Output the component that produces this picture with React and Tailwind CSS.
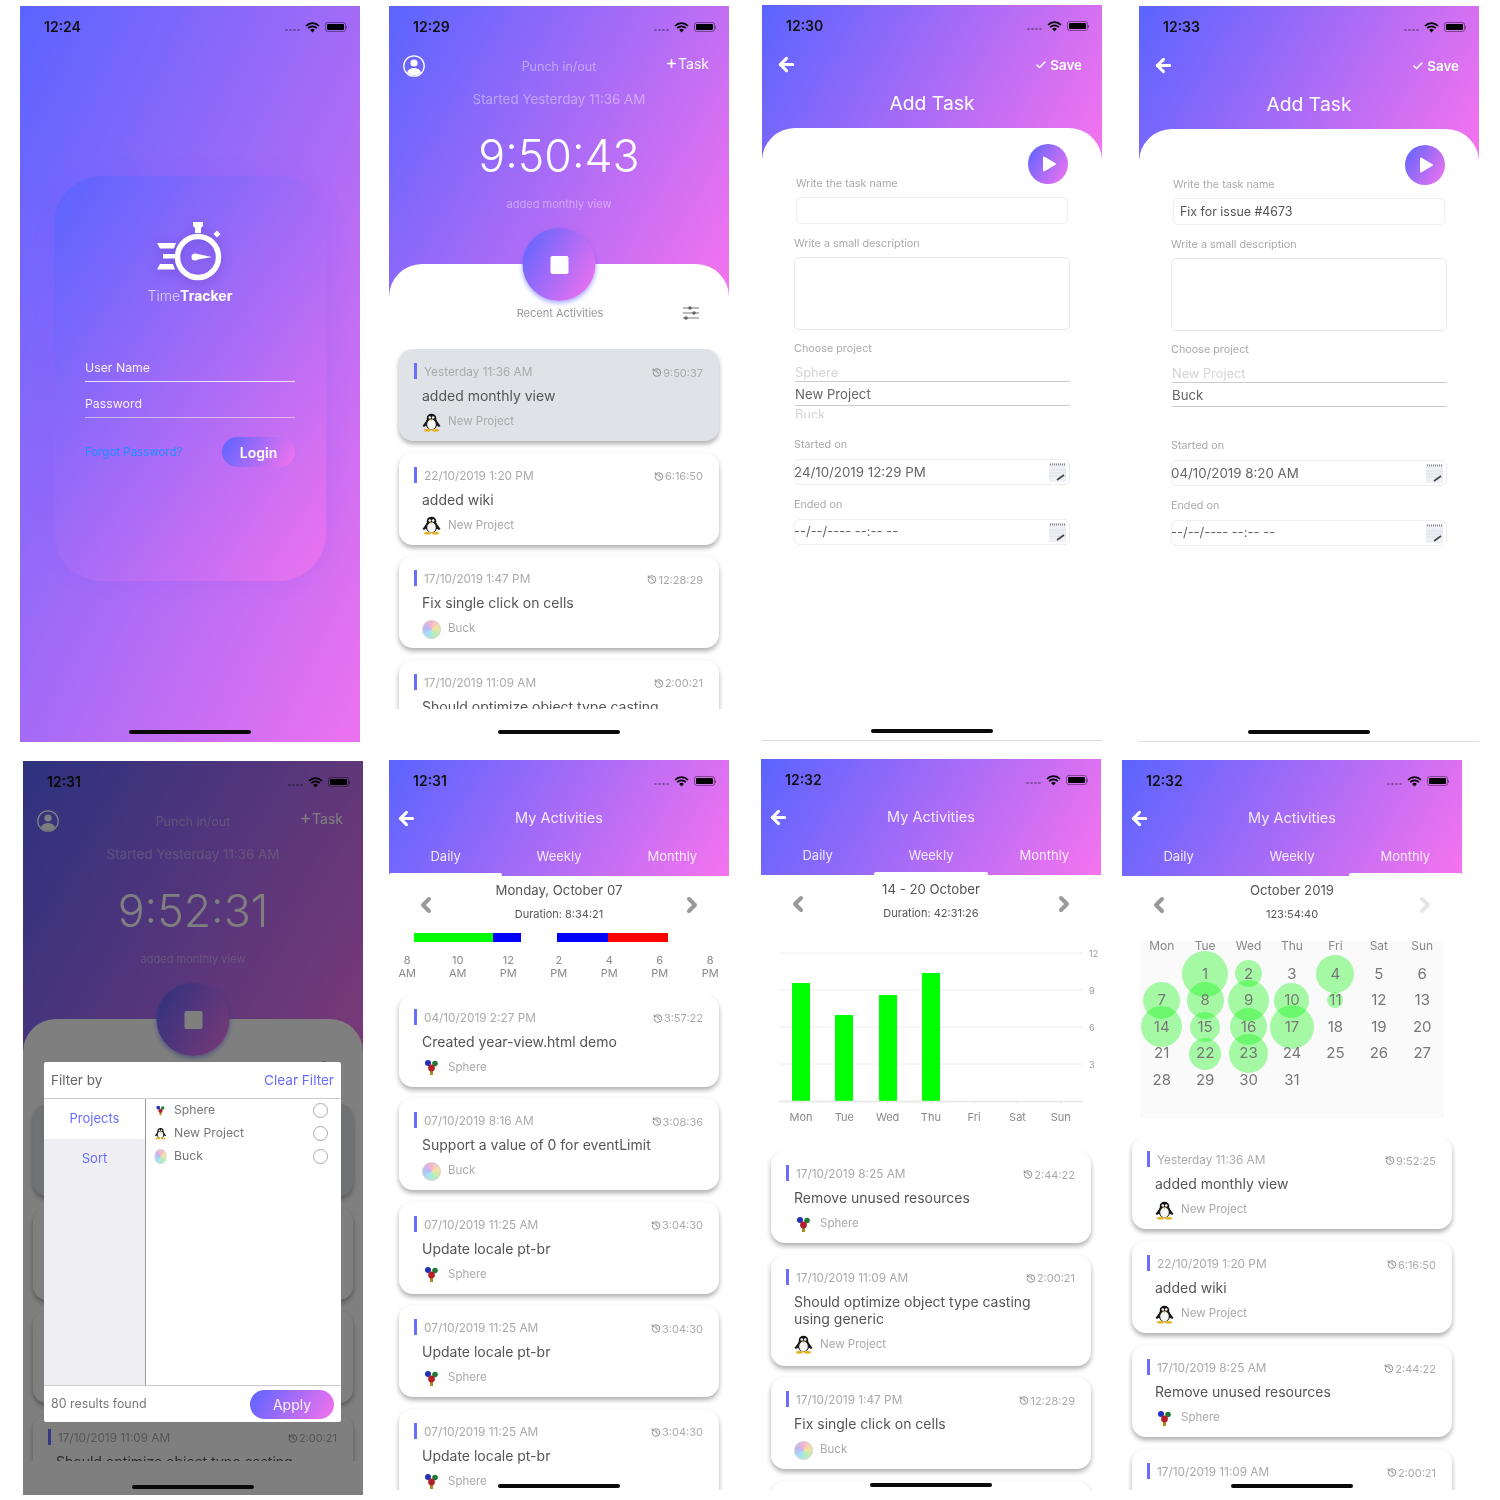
import { ArrowLeft, Check, ChevronLeft, ChevronRight, History, Plus } from 'lucide-react';

const GRADIENT = 'bg-[linear-gradient(120deg,#5a64ff,#f673ee)]';
const LOGIN_GRADIENT = 'bg-[linear-gradient(to_bottom_right,#5a64ff,#f673ee_106%)]';

const TASKS = {
  monthly: { date: 'Yesterday 11:36 AM', time: '9:50:37', title: 'added monthly view', project: 'New Project', selected: true },
  wiki: { date: '22/10/2019 1:20 PM', time: '6:16:50', title: 'added wiki', project: 'New Project' },
  cells: { date: '17/10/2019 1:47 PM', time: '12:28:29', title: 'Fix single click on cells', project: 'Buck' },
  casting: { date: '17/10/2019 11:09 AM', time: '2:00:21', title: 'Should optimize object type casting using generic', project: 'New Project' },
  demo: { date: '04/10/2019 2:27 PM', time: '3:57:22', title: 'Created year-view.html demo', project: 'Sphere' },
  limit: { date: '07/10/2019 8:16 AM', time: '3:08:36', title: 'Support a value of 0 for eventLimit', project: 'Buck' },
  locale: { date: '07/10/2019 11:25 AM', time: '3:04:30', title: 'Update locale pt-br', project: 'Sphere' },
  unused: { date: '17/10/2019 8:25 AM', time: '2:44:22', title: 'Remove unused resources', project: 'Sphere' },
};

const BUBBLES = { 1: 46, 2: 27, 4: 38, 7: 37, 8: 37, 9: 41, 10: 35, 11: 16, 14: 41, 15: 30, 16: 37, 17: 44, 22: 32, 23: 39 };

function Phone({ className = '', children }) {
  return <div className={`relative w-[340px] shrink-0 overflow-hidden bg-white flex flex-col ${className}`}>{children}</div>;
}

function HomeBar() {
  return <div className="absolute left-1/2 -translate-x-1/2 top-[724px] w-[122px] h-[4px] rounded-full bg-[#0a0a0a] z-20"></div>;
}

function StatusBar({ time }) {
  return (
    <div className="h-[42px] shrink-0 flex items-center pl-[24px] pr-[13px] text-[#111]">
      <span className="text-[14px] font-semibold -translate-y-[1px]">{time}</span>
      <div className="ml-auto flex items-center">
        <span className="flex gap-[1.5px] mr-[5px] mt-[6px]">
          <i className="w-[2.5px] h-[2.5px] rounded-full bg-black/30"></i>
          <i className="w-[2.5px] h-[2.5px] rounded-full bg-black/30"></i>
          <i className="w-[2.5px] h-[2.5px] rounded-full bg-black/30"></i>
          <i className="w-[2.5px] h-[2.5px] rounded-full bg-black/30"></i>
        </span>
        <svg width="15" height="11" viewBox="0 0 15 11" className="mr-[5px]">
          <path d="M1 4a9 9 0 0 1 13 0M3.2 6.2a6 6 0 0 1 8.6 0" fill="none" stroke="#000" strokeWidth="1.7" />
          <path d="M5.2 8a3.2 3.2 0 0 1 4.6 0L7.5 10.6z" fill="#000" />
        </svg>
        <span className="w-[21px] h-[10px] rounded-[2.5px] border border-black/40 p-[1px] flex">
          <i className="flex-1 bg-black rounded-[1px]"></i>
        </span>
        <i className="ml-[0.5px] w-[1px] h-[3px] bg-black/40"></i>
      </div>
    </div>
  );
}

function SphereIcon() {
  return (
    <svg width="19" height="19" viewBox="0 0 19 19">
      <path d="M9.5 9 L9.500 17" stroke="#a88a20" strokeWidth="3" />
      <circle cx="6" cy="5" r="3" fill="#2230b8" />
      <circle cx="13" cy="5.500" r="2.800" fill="#1f7a35" />
      <circle cx="9.500" cy="10" r="3.400" fill="#b3202a" />
    </svg>
  );
}

function PenguinIcon() {
  return (
    <svg width="19" height="19" viewBox="0 0 19 19">
      <path d="M5.500 6 L0.500 13 L2 14 L5 12zM13.500 6 L18.500 13 L17 14 L14 12z" fill="#1a1a1a" />
      <circle cx="9.500" cy="5.500" r="4.800" fill="#111" />
      <ellipse cx="9.500" cy="10.500" rx="5.800" ry="6.200" fill="#1a1a1a" />
      <ellipse cx="9.500" cy="11.500" rx="4.300" ry="5" fill="#f6f6f6" />
      <circle cx="7.800" cy="4.500" r="1.300" fill="#fff" />
      <circle cx="11.200" cy="4.500" r="1.300" fill="#fff" />
      <path d="M8 6.300h3L9.500 8z" fill="#e8b21a" />
      <ellipse cx="5.500" cy="17.300" rx="3.600" ry="1.400" fill="#e8b21a" />
      <ellipse cx="13.500" cy="17.300" rx="3.600" ry="1.400" fill="#e8b21a" />
    </svg>
  );
}

function BuckIcon() {
  return (
    <span className="block w-[19px] h-[19px] rounded-full border-[1.5px] border-[#cfcfcf] bg-[conic-gradient(#f6b4cf,#f6e2a0,#b6efb4,#a4e2f6,#bdb6f7,#f6b4cf)]"></span>
  );
}

function ProjectIcon({ name }) {
  if (name === 'Sphere') return <SphereIcon />;
  if (name === 'Buck') return <BuckIcon />;
  return <PenguinIcon />;
}

function TaskCard({ task }) {
  const long = task.title.length > 36;
  return (
    <div className={`shrink-0 rounded-[14px] pl-[15px] pr-[16px] pt-[14px] shadow-[0_3px_5px_rgba(0,0,0,0.32)] ${long ? 'pb-[11px]' : 'pb-[9px]'} ${task.selected ? 'bg-[#dfe2e6]' : 'bg-white'}`}>
      <div className="flex items-center h-[16px]">
        <span className="w-[3px] h-full bg-[#6a6eff]"></span>
        <span className="ml-[7px] translate-y-[1.500px] text-[11.800px] text-[#aaa]">{task.date}</span>
        <span className="ml-auto translate-y-[1.500px] flex items-center gap-[1px] text-[11px] text-[#aaa]">
          <History size={10} strokeWidth={2} className="text-[#777]" />
          {task.time}
        </span>
      </div>
      <div className="mt-[6.500px] pl-[8px] pr-[30px] py-[1.500px] text-[14px] leading-[17px] text-[#555]">{task.title}</div>
      <div className="mt-[6.500px] pl-[8px] h-[20px] flex items-center">
        <ProjectIcon name={task.project} />
        <span className="ml-[7px] text-[11.500px] text-[#aaa]">{task.project}</span>
      </div>
    </div>
  );
}

function CardList({ tasks, className = '', gap = 'gap-[11.500px]' }) {
  return (
    <div className={`flex flex-col px-[10px] pb-[6px] overflow-hidden ${gap} ${className}`}>
      {tasks.map((t, i) => <TaskCard key={i} task={t} />)}
    </div>
  );
}

function Logo() {
  return (
    <svg width="68" height="60" viewBox="0 0 68 60" className="drop-shadow-[0_3px_6px_rgba(60,30,160,0.35)]">
      <circle cx="42" cy="35" r="20.500" fill="none" stroke="#fff" strokeWidth="5.500" />
      <path d="M37 0h10v4l-2 2v5h-6V6l-2-2z" fill="#fff" />
      <path d="M57.500 12l3.500-3.500 3.500 3.500-3.500 3.500z" fill="#fff" />
      <circle cx="39" cy="35" r="3.500" fill="#fff" />
      <path d="M39 31.500L56 35L39 38z" fill="#fff" />
      <path d="M1 21h19l-2 5.500H4zM7 32h12v4.500H7zM1 47.500l3-5.500h13l2 5.500z" fill="#fff" />
    </svg>
  );
}

function LoginScreen() {
  return (
    <Phone className={`h-[736px] ${LOGIN_GRADIENT}`}>
      <StatusBar time="12:24" />
      <div className={`mt-[128px] mx-[34px] h-[405px] rounded-[48px] px-[31px] pt-[46px] shadow-[0_0_24px_rgba(90,70,255,0.08)] ${LOGIN_GRADIENT}`}>
        <div className="flex justify-center"><Logo /></div>
        <div className="mt-[4px] h-[20px] text-center text-[14px] leading-[20px] text-white">
          <span className="font-light text-white/70">Time</span><span className="font-bold">Tracker</span>
        </div>
        <div className="mt-[54px] h-[22px] border-b-[1.500px] border-white/80 text-[12.300px] leading-[16px] text-white/90">User Name</div>
        <div className="mt-[14px] h-[22px] border-b-[1.500px] border-white/50 text-[12.300px] leading-[16px] text-white/90">Password</div>
        <div className="mt-[19px] flex items-center justify-between">
          <span className="translate-y-[1px] text-[11.500px] text-[#1e90ff]">Forgot Password?</span>
          <span className={`w-[73px] h-[30px] rounded-full flex items-center justify-center text-[14px] font-semibold text-white ${GRADIENT}`}>Login</span>
        </div>
      </div>
      <HomeBar />
    </Phone>
  );
}

function FilterIcon() {
  return (
    <svg width="18" height="14" viewBox="0 0 18 14" className="justify-self-end mr-[29px]">
      <path d="M1 2h16M1 7h16M1 12h16" stroke="#777" strokeWidth="1.200" />
      <circle cx="8" cy="2" r="1.800" fill="#666" />
      <circle cx="12" cy="7" r="1.800" fill="#666" />
      <circle cx="4" cy="12" r="1.800" fill="#666" />
    </svg>
  );
}

function PunchScreen({ time, clock, status, dimmed, children }) {
  return (
    <Phone className={dimmed ? 'h-[734px]' : 'h-[736px]'}>
      <div className={`h-[290px] shrink-0 flex flex-col ${GRADIENT}`}>
        <StatusBar time={time} />
        <div className="h-[36px] grid grid-cols-[1fr_auto_1fr] items-center px-[14px]">
          <svg width="22" height="22" viewBox="0 0 22 22">
            <circle cx="11" cy="11" r="10.200" fill="none" stroke="#fff" strokeWidth="1.300" />
            <circle cx="11" cy="8" r="3.600" fill="#fff" />
            <path d="M4 17.500c1.500-3.500 4-4.500 7-4.500s5.500 1 7 4.500a10 10 0 0 1-14 0z" fill="#fff" />
          </svg>
          <span className="mt-[2px] text-[12.500px] text-white/40">Punch in/out</span>
          <span className="justify-self-end flex items-center mr-[6px] text-[14px] text-white -mt-[6px]"><Plus size={13} strokeWidth={3} />Task</span>
        </div>
        <div className="h-[30px] flex items-center justify-center text-[13.400px] text-white/40">Started {status}</div>
        <div className="h-[86px] flex items-center justify-center text-[44.700px] font-light text-white">{clock}</div>
        <div className="h-[8px] flex items-center justify-center text-[11px] text-white/40">added monthly view</div>
      </div>
      <div className="relative -mt-[32px] rounded-t-[33px] bg-white flex-1 min-h-0 flex flex-col">
        <div className={`absolute -top-[36px] left-1/2 -translate-x-1/2 w-[73px] h-[73px] rounded-full flex items-center justify-center shadow-[0_2px_5px_rgba(90,100,255,0.6)] ${GRADIENT}`}>
          <span className="w-[18px] h-[18px] rounded-[2px] bg-white"></span>
        </div>
        <div className="mt-[41px] h-[16px] grid grid-cols-[1fr_auto_1fr] items-center">
          <span></span>
          <span className="text-[11px] text-[#999] pl-[2px]">Recent Activities</span>
          <FilterIcon />
        </div>
        <CardList className={`mt-[28px] shrink-0 ${dimmed ? 'h-[357px]' : 'h-[360px]'}`} tasks={[TASKS.monthly, TASKS.wiki, TASKS.cells, TASKS.casting]} />
      </div>
      {dimmed && <div className="absolute inset-0 z-20 bg-black/50"></div>}
      <HomeBar />
      {children}
    </Phone>
  );
}

function FilterRow({ name }) {
  return (
    <div className="h-[23px] flex items-center pl-[7px] pr-[13px]">
      <span className="w-[15px] flex justify-center scale-[0.8]"><ProjectIcon name={name} /></span>
      <span className="ml-[6px] text-[12.200px] text-[#777]">{name}</span>
      <span className="ml-auto w-[15px] h-[15px] rounded-full border border-[#aaa]"></span>
    </div>
  );
}

function FilterModal() {
  return (
    <div className="absolute z-30 left-[21px] top-[301px] w-[297px] h-[360px] rounded-[2px] bg-white flex flex-col">
      <div className="h-[37px] shrink-0 border-b border-[#ccc] flex items-center justify-between px-[7px]">
        <span className="text-[13.500px] text-[#666]">Filter by</span>
        <span className="text-[13.600px] text-[#6a6eff]">Clear Filter</span>
      </div>
      <div className="flex-1 flex min-h-0">
        <div className="w-[102px] shrink-0 border-r border-[#999] bg-[#eeeef3] flex flex-col">
          <div className="h-[40px] bg-white flex items-center justify-center text-[13px] text-[#6a6eff]">Projects</div>
          <div className="h-[40px] flex items-center justify-center text-[13px] text-[#6a6eff]">Sort</div>
        </div>
        <div className="flex-1">
          <FilterRow name="Sphere" />
          <FilterRow name="New Project" />
          <FilterRow name="Buck" />
        </div>
      </div>
      <div className="h-[37px] shrink-0 border-t border-[#ccc] flex items-center justify-between px-[7px]">
        <span className="text-[12.400px] text-[#777]">80 results found</span>
        <span className={`w-[84px] h-[29px] rounded-full flex items-center justify-center text-[14px] text-white/90 ${GRADIENT}`}>Apply</span>
      </div>
    </div>
  );
}

function Field({ label, className = '' }) {
  return <div className={`h-[16px] pt-[1px] text-[10.800px] leading-[16px] text-[#aaa] ${className}`}>{label}</div>;
}

function CalendarGlyph() {
  return (
    <svg width="17" height="20" viewBox="0 0 17 20">
      <rect x="0" y="1" width="17" height="19" fill="#eef0f5" />
      <path d="M1 2.500h15" stroke="#888" strokeWidth="2" strokeDasharray="1 1" />
      <path d="M0 8h17M0 11h17M0 14h17" stroke="#dde0e8" strokeWidth="1" />
      <path d="M8 18l7-5" stroke="#444" strokeWidth="1.600" />
    </svg>
  );
}

function DateField({ value, muted }) {
  return (
    <div className="mt-[7px] h-[26px] rounded-[6px] border border-[#eee] flex items-center pr-[3px]">
      <span className={`-ml-[1px] ${muted ? 'text-[13px]' : 'translate-y-[1px] text-[13.300px]'} text-[#666]`}>{value}</span>
      <span className="ml-auto"><CalendarGlyph /></span>
    </div>
  );
}

function AddTaskScreen({ time, name, picker, started }) {
  return (
    <Phone className="h-[736px] border-b border-[#ddd]">
      <div className={`h-[153px] shrink-0 flex flex-col ${GRADIENT}`}>
        <StatusBar time={time} />
        <div className="h-[34px] flex items-center justify-between pl-[14px] pr-[20px] text-white">
          <ArrowLeft size={21} strokeWidth={3.500} />
          <span className="translate-y-[1px] flex items-center gap-[3px] text-[13.400px] font-semibold"><Check size={12} strokeWidth={3} />Save</span>
        </div>
        <div className="h-[44px] flex items-center justify-center text-[19.300px] text-white">Add Task</div>
      </div>
      <div className="relative -mt-[30px] rounded-t-[33px] bg-white flex-1 flex flex-col px-[32px] pt-[47px]">
        <div className={`absolute top-[16px] right-[34px] w-[40px] h-[40px] rounded-full flex items-center justify-center pl-[2px] ${GRADIENT}`}>
          <svg width="16" height="16" viewBox="0 0 16 16"><path d="M2 1.500a1 1 0 0 1 1.500-.8l11 6.500a1 1 0 0 1 0 1.600l-11 6.500a1 1 0 0 1-1.500-.8z" fill="#fff" /></svg>
        </div>
        <Field label="Write the task name" className="pl-[2px]" />
        <div className="mt-[6px] mx-[2px] h-[27px] rounded-[5px] border border-[#eee] flex items-center pl-[6px] pt-[1px] text-[12.400px] text-[#555]">{name}</div>
        <Field label="Write a small description" className="mt-[11px]" />
        <div className="mt-[6px] h-[73px] rounded-[5px] border border-[#e8e8e8]"></div>
        <Field label="Choose project" className="mt-[10px]" />
        <div className="h-[62px] overflow-hidden pl-[1px]">
          <div className="h-[26px] pt-[8px] border-b border-[#ccc] flex items-center text-[12.800px] text-[#d4d4d4]">{picker[0]}</div>
          <div className="h-[24px] pt-[2px] border-b border-[#ccc] flex items-center text-[13.200px] text-[#666]">{picker[1]}</div>
          <div className="h-[18px] flex items-center text-[12.800px] text-[#d4d4d4]">{picker[2]}</div>
        </div>
        <Field label="Started on" className="mt-[18px]" />
        <DateField value={started} />
        <Field label="Ended on" className="mt-[11px]" />
        <DateField value="--/--/---- --:-- --" muted />
      </div>
      <HomeBar />
    </Phone>
  );
}

function ActivitiesHeader({ time, active }) {
  return (
    <div className={`h-[116px] shrink-0 flex flex-col ${GRADIENT}`}>
      <StatusBar time={time} />
      <div className="h-[32px] grid grid-cols-[1fr_auto_1fr] items-center px-[7px] text-white">
        <ArrowLeft size={21} strokeWidth={3.500} />
        <span className="text-[14.500px] text-white/85">My Activities</span>
      </div>
      <div className="flex-1 grid grid-cols-3 text-[13px] text-white/85">
        {['Daily', 'Weekly', 'Monthly'].map((tab) => (
          <div key={tab} className="flex flex-col">
            <div className="flex-1 pt-[6px] flex items-center justify-center">{tab}</div>
            <div className={`h-[3px] rounded-t-[2px] ${tab === active ? 'bg-white' : ''}`}></div>
          </div>
        ))}
      </div>
    </div>
  );
}

function SubNav({ title, sub, nextMuted }) {
  return (
    <div className="pt-[4px] px-[25px] flex items-start justify-between shrink-0">
      <ChevronLeft size={24} strokeWidth={4} className="mt-[13px] text-[#999]" />
      <div className="flex flex-col items-center">
        <div className="h-[20px] pt-[2px] flex items-center text-[13.200px] text-[#555]">{title}</div>
        <div className="mt-[4px] h-[20px] flex items-center text-[11px] text-[#555]">{sub}</div>
      </div>
      <ChevronRight size={24} strokeWidth={4} className={`mt-[13px] ${nextMuted ? 'text-[#e6e6e6]' : 'text-[#999]'}`} />
    </div>
  );
}

function DailyScreen() {
  const hours = [['8', 'AM'], ['10', 'AM'], ['12', 'PM'], ['2', 'PM'], ['4', 'PM'], ['6', 'PM'], ['8', 'PM']];
  return (
    <Phone className="h-[730px]">
      <ActivitiesHeader time="12:31" active="Daily" />
      <SubNav title="Monday, October 07" sub="Duration: 8:34:21" />
      <div className="mt-[9px] pl-[25px] h-[9px] flex shrink-0">
        <span className="w-[79px] bg-[#00ff00]"></span>
        <span className="w-[28px] bg-[#0000ff]"></span>
        <span className="w-[51px] ml-[36px] bg-[#0000ff]"></span>
        <span className="w-[60px] bg-[#ff0000]"></span>
      </div>
      <div className="mt-[12px] -ml-[7px] w-[353.500px] grid grid-cols-7 shrink-0 text-center text-[11px] leading-[13px] text-[#888]">
        {hours.map(([h, m], i) => <div key={i}>{h}<br />{m}</div>)}
      </div>
      <CardList className="mt-[14.500px] flex-1 min-h-0" tasks={[TASKS.demo, TASKS.limit, TASKS.locale, TASKS.locale, TASKS.locale]} />
      <HomeBar />
    </Phone>
  );
}

function WeekChart() {
  const days = ['Mon', 'Tue', 'Wed', 'Thu', 'Fri', 'Sat', 'Sun'];
  const bars = [[31, 60], [74, 92], [118, 72], [161, 50]];
  const grid = [[30, '12'], [67, '9'], [104, '6'], [141, '3']];
  return (
    <svg width="340" height="217" viewBox="0 0 340 217" className="shrink-0">
      {grid.map(([y, label]) => (
        <g key={label}>
          <line x1="18" x2="322" y1={y} y2={y} stroke="#eee" />
          <text x="328" y={y + 4} fontSize="9" fill="#999">{label}</text>
        </g>
      ))}
      {bars.map(([x, y]) => <rect key={x} x={x} y={y} width="18" height={178 - y} fill="#00ff00" />)}
      <line x1="18" x2="322" y1="178.500" y2="178.500" stroke="#e6e6e6" strokeWidth="1.500" />
      {days.map((d, i) => (
        <g key={d}>
          <line x1={40 + i * 43.300} x2={40 + i * 43.300} y1="178" y2="181" stroke="#e6e6e6" />
          <text x={40 + i * 43.300} y="198" fontSize="11" textAnchor="middle" fill="#888">{d}</text>
        </g>
      ))}
    </svg>
  );
}

function WeeklyScreen() {
  return (
    <Phone className="h-[731px]">
      <ActivitiesHeader time="12:32" active="Weekly" />
      <SubNav title="14 - 20 October" sub="Duration: 42:31:26" />
      <WeekChart />
      <CardList className="mt-[11px] flex-1 min-h-0" tasks={[TASKS.unused, TASKS.casting, TASKS.cells, TASKS.unused]} />
      <HomeBar />
    </Phone>
  );
}

function MonthCalendar() {
  const days = ['Mon', 'Tue', 'Wed', 'Thu', 'Fri', 'Sat', 'Sun'];
  const dates = [null, ...Array.from({ length: 31 }, (_, i) => i + 1)];
  return (
    <div className="mt-[17px] mx-[18px] h-[177px] shrink-0 bg-[#fafafa]">
      <div className="grid grid-cols-7 h-[9px] leading-[9px] text-center text-[12px] text-[#888]">
        {days.map((d) => <div key={d}>{d}</div>)}
      </div>
      <div className="mt-[10.500px] grid grid-cols-7 auto-rows-[26.600px] text-[15px] text-[#777]">
        {dates.map((d, i) => (
          <div key={i} className="relative flex items-center justify-center">
            {BUBBLES[d] && (
              <span
                className="absolute rounded-full bg-[rgba(0,245,0,0.34)]"
                style={{ width: BUBBLES[d], height: BUBBLES[d] }}
              ></span>
            )}
            <span className="relative">{d}</span>
          </div>
        ))}
      </div>
    </div>
  );
}

function MonthlyScreen() {
  return (
    <Phone className="h-[730px]">
      <ActivitiesHeader time="12:32" active="Monthly" />
      <SubNav title="October 2019" sub="123:54:40" nextMuted />
      <MonthCalendar />
      <CardList
        className="mt-[19px] flex-1 min-h-0"
        gap="gap-[12px]"
        tasks={[{ ...TASKS.monthly, time: '9:52:25', selected: false }, TASKS.wiki, TASKS.unused, TASKS.casting]}
      />
      <HomeBar />
    </Phone>
  );
}

export default function App() {
  return (
    <div className="w-[1500px] h-[1500px] bg-white overflow-hidden font-[Inter,sans-serif] blur-[0.35px]">
      <div className="h-[742px] flex items-start">
        <div className="ml-[20px] mt-[6px]"><LoginScreen /></div>
        <div className="ml-[29px] mt-[6px]"><PunchScreen time="12:29" clock="9:50:43" status="Yesterday 11:36 AM" /></div>
        <div className="ml-[33px] mt-[5px]">
          <AddTaskScreen time="12:30" name="" picker={['Sphere', 'New Project', 'Buck']} started="24/10/2019 12:29 PM" />
        </div>
        <div className="ml-[37px] mt-[6px]">
          <AddTaskScreen time="12:33" name="Fix for issue #4673" picker={['New Project', 'Buck', '']} started="04/10/2019 8:20 AM" />
        </div>
      </div>
      <div className="flex items-start">
        <div className="ml-[23px] mt-[19px]">
          <PunchScreen time="12:31" clock="9:52:31" status="Yesterday 11:36 AM" dimmed>
            <FilterModal />
          </PunchScreen>
        </div>
        <div className="ml-[26px] mt-[18px]"><DailyScreen /></div>
        <div className="ml-[32px] mt-[17px]"><WeeklyScreen /></div>
        <div className="ml-[21px] mt-[18px]"><MonthlyScreen /></div>
      </div>
    </div>
  );
}
